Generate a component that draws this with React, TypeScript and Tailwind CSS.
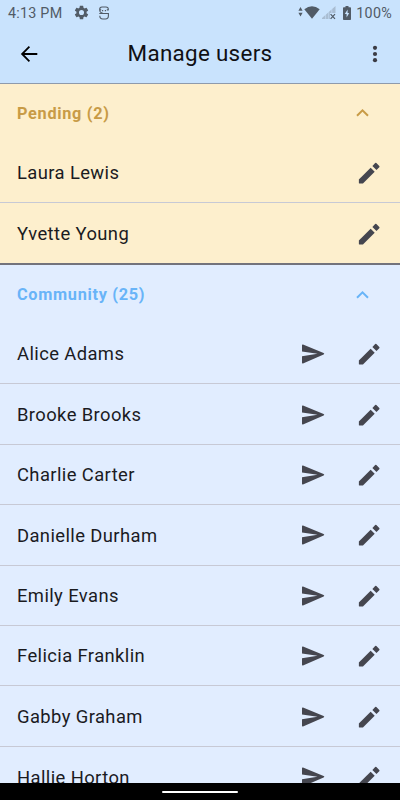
import React from 'react';

const pending = ['Laura Lewis', 'Yvette Young'];
const community = [
    'Alice Adams',
    'Brooke Brooks',
    'Charlie Carter',
    'Danielle Durham',
    'Emily Evans',
    'Felicia Franklin',
    'Gabby Graham',
    'Hallie Horton',
];

const PencilIcon = () => (
    <svg viewBox="0 0 24 24" className="size-7 shrink-0 fill-[#45464f]">
        <path d="M3.3 17.5V20.6Q3.3 21 3.7 21H6.8L16.9 10.9 13.4 7.4Z" />
        <path d="M14.9 5.9 18.4 9.4 20.8 7Q21.3 6.5 20.8 6L18.3 3.5Q17.8 3 17.3 3.5Z" />
    </svg>
);

const SendIcon = () => (
    <svg viewBox="0 0 24 20" className="h-5 w-6 shrink-0 fill-[#45464f]">
        <path d="M1 1.2Q1 .2 2 .5L22.6 9.1Q24 9.8 22.6 10.5L2 19.4Q1 19.7 1 18.7V12.3L16.5 9.8 1 7.4Z" />
    </svg>
);

const ChevronUp: React.FC<{ className: string }> = ({ className }) => (
    <svg viewBox="0 0 14 10" className={`mb-px h-2.5 w-3.5 fill-none stroke-2 ${className}`}>
        <path d="M2 7.8 7.5 2.3 13 7.8" />
    </svg>
);

const StatusBar = () => (
    <div className="flex h-[26px] items-center pl-2 pr-2 text-[14.3px] text-[#515b66]">
        <span className="w-[65px] pt-px tracking-[0.25px]">4:13 PM</span>
        <svg viewBox="0 0 24 24" className="mb-px size-[17px] fill-current">
            <path d="M19.14 12.94c.04-.3.06-.61.06-.94 0-.32-.02-.64-.07-.94l2.03-1.58a.49.49 0 0 0 .12-.61l-1.92-3.32a.488.488 0 0 0-.59-.22l-2.39.96c-.5-.38-1.03-.7-1.62-.94l-.36-2.54a.484.484 0 0 0-.48-.41h-3.84c-.24 0-.43.17-.47.41l-.36 2.54c-.59.24-1.13.57-1.62.94l-2.39-.96c-.22-.08-.47 0-.59.22L2.74 8.87c-.12.21-.08.47.12.61l2.03 1.58c-.05.3-.09.63-.09.94s.02.64.07.94l-2.03 1.58a.49.49 0 0 0-.12.61l1.92 3.32c.12.22.37.29.59.22l2.39-.96c.5.38 1.03.7 1.62.94l.36 2.54c.05.24.24.41.48.41h3.84c.24 0 .44-.17.47-.41l.36-2.54c.59-.24 1.13-.56 1.62-.94l2.39.96c.22.08.47 0 .59-.22l1.92-3.32c.12-.22.07-.47-.12-.61zM12 15.6A3.6 3.6 0 1 1 12 8.4a3.6 3.6 0 0 1 0 7.2z" />
        </svg>
        <svg viewBox="0 0 12 14" className="mb-px ml-2 h-3.5 w-3 fill-none stroke-current stroke-[1.1]">
            <path d="M10.3 4.3V3.2Q10.3 1 8 1H4Q1.7 1 1.7 3.2V4.3Q1.7 6 3.4 6.7L5 7.4M10.6 3.9H8.8M3.2 3.9H1.4M4 4.6H5.2M6.8 4.6H8M1.3 7.5H10.4V9.8Q10.4 13 7.5 13H4.8Q1.8 13 1.8 9.8" />
        </svg>
        <div className="ml-auto flex items-center">
            <svg viewBox="0 0 6 12" className="mr-px mb-[3px] h-3 w-[5px] fill-current">
                <path d="M3 0 5.5 4.5H.5ZM.5 7H5.5L3 11.5Z" />
            </svg>
            <svg viewBox="0 0 16 13" className="mb-px h-[13px] w-4 fill-current">
                <path d="M.3 3.2Q8-2.8 15.7 3.2L8 12.7Z" />
            </svg>
            <svg viewBox="0 0 14 14" className="ml-[2px] h-3.5 w-3.5">
                <path d="M0 13V12L13.5 0V7H8V13Z" className="fill-[#a9bdd2]" />
                <path d="M3.6 8V13M6.7 6V13M9.8 3V7" className="stroke-[#c9e3fd] stroke-[0.6]" />
                <path d="M8.6 8.2 13 12.8M13 8.2 8.6 12.8" className="stroke-current stroke-[1.2]" />
            </svg>
            <svg viewBox="0 0 8 14" className="ml-[7px] h-3.5 w-2 fill-current">
                <path d="M2.5 0H5.5V1.3H7.2Q8 1.3 8 2.1V13.2Q8 14 7.2 14H.8Q0 14 0 13.2V2.1Q0 1.3.8 1.3H2.5Z" />
                <path d="M4.6 3.5 1.8 8H3.6V11.5L6.2 7H4.6Z" className="fill-[#c9e3fd]" />
            </svg>
            <span className="ml-[5px] pt-px tracking-[0.3px]">100%</span>
        </div>
    </div>
);

const UserRow: React.FC<{ name: string; canSend?: boolean }> = ({ name, canSend }) => (
    <div className="flex h-[60.4px] shrink-0 items-center border-b border-[#c7c9d5] pt-px pl-[17px] pr-[17px] last:border-b-0">
        <span className="flex-1 text-[18.4px] tracking-[0.4px] text-[#1b1b1f]">{name}</span>
        {canSend && <SendIcon />}
        <div className="ml-[30px] flex">
            <PencilIcon />
        </div>
    </div>
);

export default function App() {
    return (
        <div className="flex h-[800px] w-[400px] flex-col overflow-hidden bg-[#e1edff] font-[Roboto,sans-serif]">
            <header className="h-[84px] shrink-0 border-b border-[#8e9aac] bg-[#c9e3fd]">
                <StatusBar />
                <div className="flex h-[56px] items-center pl-[20px] pr-[21px]">
                    <svg viewBox="0 0 18 18" className="size-[18px] fill-none stroke-black stroke-[1.8]">
                        <path d="M17.3 9H2.2M9.4 1.7 2.1 9 9.4 16.3" />
                    </svg>
                    <h1 className="flex-1 pr-[9px] text-center text-[22.4px] tracking-[0.3px] text-[#101014]">Manage users</h1>
                    <svg viewBox="0 0 8 18" className="h-[18px] w-2 fill-[#3b3c44]">
                        <circle cx="4" cy="2.8" r="2.1" />
                        <circle cx="4" cy="9" r="2.1" />
                        <circle cx="4" cy="15.2" r="2.1" />
                    </svg>
                </div>
            </header>
            <main className="flex min-h-0 flex-1 flex-col overflow-hidden">
                <section className="shrink-0 border-b-2 border-[#73737c] bg-[#fdefcd]">
                    <div className="flex h-[58.5px] items-center justify-between pt-px pl-[17px] pr-[31px]">
                        <h2 className="text-[16.3px] font-bold tracking-[0.7px] text-[#c89b46]">Pending (2)</h2>
                        <ChevronUp className="stroke-[#c89b46]" />
                    </div>
                    {pending.map(name => <UserRow key={name} name={name} />)}
                </section>
                <section>
                    <div className="flex h-[58.7px] items-center justify-between pt-px pl-[17px] pr-[31px]">
                        <h2 className="text-[16.3px] font-bold tracking-[0.7px] text-[#68b4f8]">Community (25)</h2>
                        <ChevronUp className="stroke-[#68b4f8]" />
                    </div>
                    {community.map(name => <UserRow key={name} name={name} canSend />)}
                </section>
            </main>
            <footer className="flex h-[17px] shrink-0 items-center justify-center bg-black">
                <div className="h-[2px] w-[76px] rounded-full bg-white" />
            </footer>
        </div>
    );
}
